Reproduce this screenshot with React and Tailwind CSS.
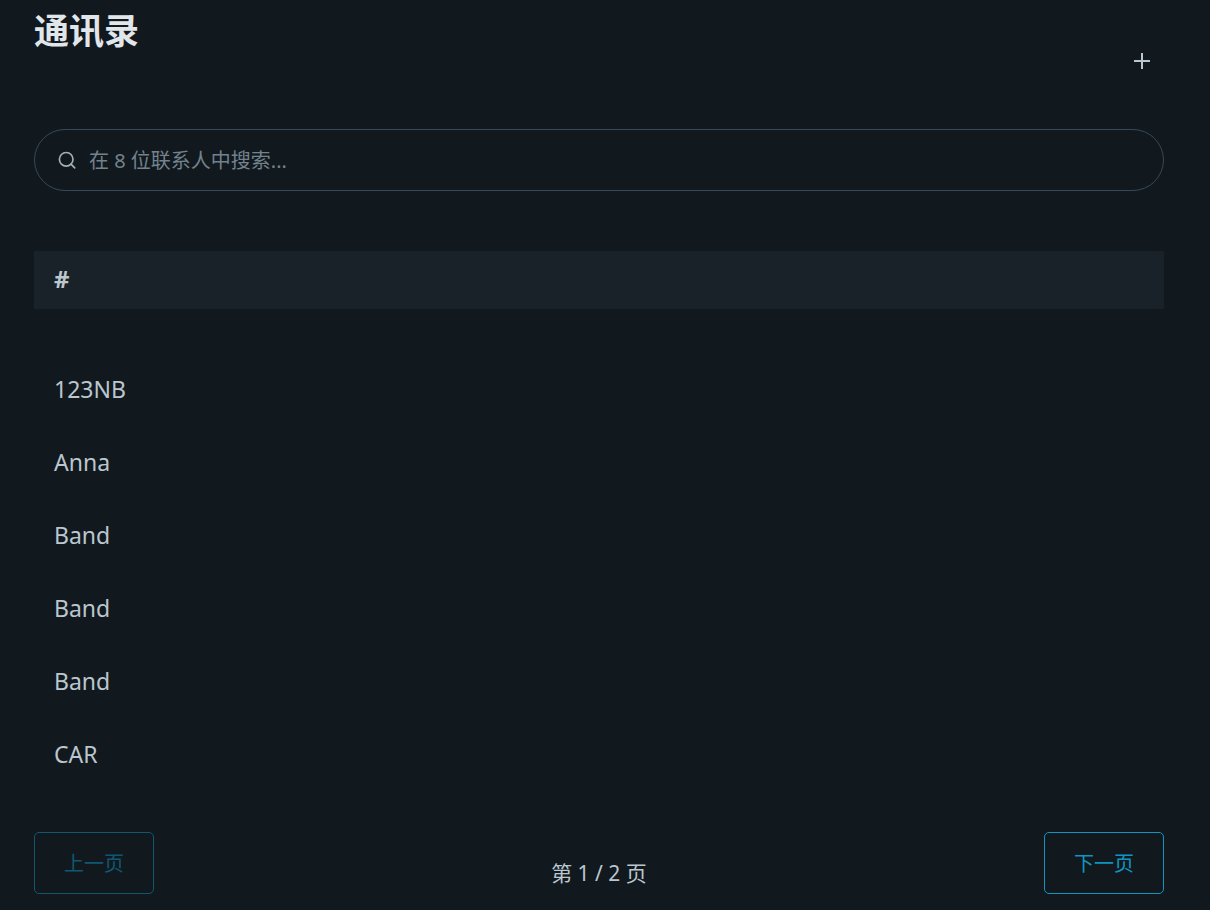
import React, { useState } from "react";

const contacts = [
  { id: 1, name: "123NB" },
  { id: 2, name: "Anna" },
  { id: 3, name: "Band" },
  { id: 4, name: "Band" },
  { id: 5, name: "Band" },
  { id: 6, name: "CAR" },
  { id: 7, name: "David" },
  { id: 8, name: "Emma" },
];

const PAGE_SIZE = 6;

const App = () => {
  const [page, setPage] = useState(1);
  const [query, setQuery] = useState("");

  const found = contacts.filter((contact) =>
    contact.name.toLowerCase().includes(query.toLowerCase())
  );
  const pageCount = Math.max(1, Math.ceil(found.length / PAGE_SIZE));
  const rows = found.slice((page - 1) * PAGE_SIZE, page * PAGE_SIZE);

  const handleSearch = (e) => {
    setQuery(e.target.value);
    setPage(1);
  };

  return (
    <div className="min-h-screen bg-[#11191f] pl-[34px] pr-[46px] pb-4 font-['Noto_Sans','Noto_Sans_CJK_SC',sans-serif] text-[#bbc6ce]">
      <header className="flex items-start justify-between">
        <h1 className="pt-[7px] text-[35px] leading-[48px] font-bold text-[#e1e6eb]">
          通讯录
        </h1>
        <button
          type="button"
          aria-label="添加联系人"
          className="mt-[47px] mr-2 flex size-7 items-center justify-center"
        >
          <svg
            className="size-7"
            viewBox="0 0 28 28"
            fill="none"
            stroke="currentColor"
            strokeWidth="2"
          >
            <path d="M14 6v16M6 14h16" />
          </svg>
        </button>
      </header>

      <label className="mt-[54px] flex h-[62px] items-center gap-3 rounded-full border border-[#374956] pl-[22px] pr-6">
        <svg
          className="size-5 shrink-0 text-[#a2afb9]"
          viewBox="0 0 20 20"
          fill="none"
          stroke="currentColor"
          strokeWidth="1.7"
          strokeLinecap="round"
        >
          <circle cx="9.2" cy="9.3" r="6.8" />
          <path d="M14 14.2l3.7 3.6" />
        </svg>
        <input
          type="search"
          aria-label="搜索联系人"
          placeholder="在 8 位联系人中搜索..."
          value={query}
          onChange={handleSearch}
          className="min-w-0 flex-1 bg-transparent pt-0.5 text-xl outline-none placeholder:text-[#73828c]"
        />
      </label>

      <table className="mt-[60px] w-full text-left">
        <thead>
          <tr className="bg-[#1a2229]">
            <th className="h-[58px] px-5 pb-0.5 text-2xl font-bold">#</th>
          </tr>
        </thead>
      </table>

      <ul className="mt-[43px]">
        {rows.map((contact) => (
          <li
            key={contact.id}
            className="flex h-[73px] items-center px-5 text-[23px] leading-8"
          >
            {contact.name}
          </li>
        ))}
      </ul>

      <nav className="mt-[42px] flex items-start justify-between">
        <button
          type="button"
          disabled={page === 1}
          onClick={() => setPage(page - 1)}
          className="h-[62px] w-[120px] rounded-[5px] border border-[#1095c1] pt-0.5 text-xl text-[#1095c1] disabled:opacity-50"
        >
          上一页
        </button>
        <span className="mt-[25px] text-[21px] leading-8">
          第 {page} / {pageCount} 页
        </span>
        <button
          type="button"
          disabled={page === pageCount}
          onClick={() => setPage(page + 1)}
          className="h-[62px] w-[120px] rounded-[5px] border border-[#1095c1] pt-0.5 text-xl text-[#1095c1] disabled:opacity-50"
        >
          下一页
        </button>
      </nav>
    </div>
  );
};

export default App;
